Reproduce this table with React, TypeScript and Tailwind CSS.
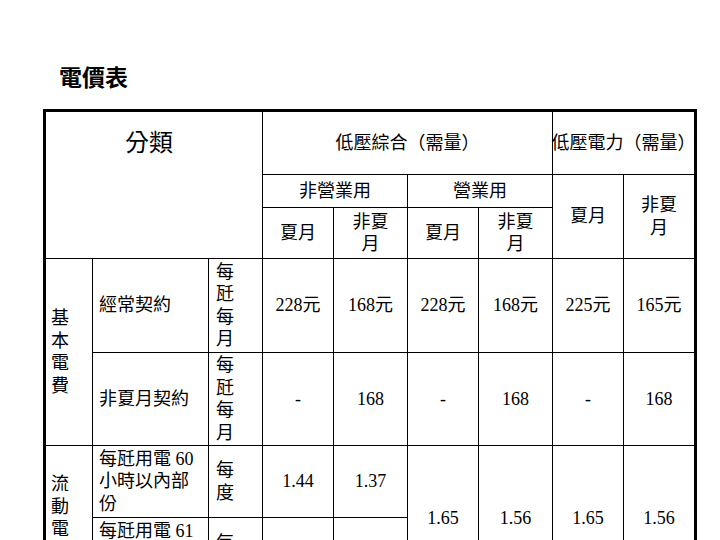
const C = "bg-white flex items-center justify-center text-center whitespace-nowrap";
const L = "bg-white flex items-center justify-start text-left whitespace-nowrap";

export default function App() {
  return (
    <div className="w-[720px] h-[540px] overflow-hidden bg-white text-black font-['Liberation_Serif','Noto_Sans_CJK_TC',serif]">
      <div className="pt-[63px] pl-[59px] text-[23px] font-bold leading-[26px] font-['Noto_Sans_CJK_TC',sans-serif]">
        電價表
      </div>
      <div className="ml-[43px] mt-[20px] w-[654px] border-[3px] border-black bg-black grid gap-px grid-cols-[46px_115px_53px_70px_73px_70px_73px_70px_70px] grid-rows-[62px_32px_50px_93px_92px_71px_72px] text-[18px] leading-[22.5px]">
        {/* header row 1 */}
        <div className="bg-white col-start-1 col-span-3 row-start-1 row-span-3 flex justify-center items-start pt-[17px] pr-[10px] text-[24px] leading-[28px]">
          分類
        </div>
        <div className={`${C} col-start-4 col-span-4 row-start-1`}>低壓綜合（需量）</div>
        <div className={`${C} col-start-8 col-span-2 row-start-1`}>低壓電力（需量）</div>

        {/* header row 2 */}
        <div className={`${C} col-start-4 col-span-2 row-start-2`}>非營業用</div>
        <div className={`${C} col-start-6 col-span-2 row-start-2`}>營業用</div>
        <div className={`${C} col-start-8 row-start-2 row-span-2`}>夏月</div>
        <div className={`${C} col-start-9 row-start-2 row-span-2`}>
          非夏
          <br />月
        </div>

        {/* header row 3 */}
        <div className={`${C} col-start-4 row-start-3`}>夏月</div>
        <div className={`${C} col-start-5 row-start-3`}>
          非夏
          <br />月
        </div>
        <div className={`${C} col-start-6 row-start-3`}>夏月</div>
        <div className={`${C} col-start-7 row-start-3`}>
          非夏
          <br />月
        </div>

        {/* basic fee */}
        <div className={`${L} col-start-1 row-start-4 row-span-2 pl-[5px]`}>
          基<br />本<br />電<br />費
        </div>
        <div className={`${L} col-start-2 row-start-4 pl-[6px]`}>經常契約</div>
        <div className={`${L} col-start-3 row-start-4 pl-[7px]`}>
          每<br />瓩<br />每<br />月
        </div>
        <div className={`${C} col-start-4 row-start-4`}>228元</div>
        <div className={`${C} col-start-5 row-start-4`}>168元</div>
        <div className={`${C} col-start-6 row-start-4`}>228元</div>
        <div className={`${C} col-start-7 row-start-4`}>168元</div>
        <div className={`${C} col-start-8 row-start-4`}>225元</div>
        <div className={`${C} col-start-9 row-start-4`}>165元</div>

        <div className={`${L} col-start-2 row-start-5 pl-[6px]`}>非夏月契約</div>
        <div className={`${L} col-start-3 row-start-5 pl-[7px]`}>
          每<br />瓩<br />每<br />月
        </div>
        <div className={`${C} col-start-4 row-start-5`}>-</div>
        <div className={`${C} col-start-5 row-start-5`}>168</div>
        <div className={`${C} col-start-6 row-start-5`}>-</div>
        <div className={`${C} col-start-7 row-start-5`}>168</div>
        <div className={`${C} col-start-8 row-start-5`}>-</div>
        <div className={`${C} col-start-9 row-start-5`}>168</div>

        {/* energy fee */}
        <div className={`${L} col-start-1 row-start-6 row-span-2 pl-[5px]`}>
          流<br />動<br />電<br />費
        </div>
        <div className={`${L} col-start-2 row-start-6 pl-[6px]`}>
          每瓩用電 60
          <br />小時以內部
          <br />份
        </div>
        <div className={`${L} col-start-3 row-start-6 pl-[7px]`}>
          每<br />度
        </div>
        <div className={`${C} col-start-4 row-start-6`}>1.44</div>
        <div className={`${C} col-start-5 row-start-6`}>1.37</div>
        <div className={`${C} col-start-6 row-start-6 row-span-2`}>1.65</div>
        <div className={`${C} col-start-7 row-start-6 row-span-2`}>1.56</div>
        <div className={`${C} col-start-8 row-start-6 row-span-2`}>1.65</div>
        <div className={`${C} col-start-9 row-start-6 row-span-2`}>1.56</div>

        <div className={`${L} col-start-2 row-start-7 pl-[6px]`}>
          每瓩用電 61
          <br />小時以上部
          <br />份
        </div>
        <div className={`${L} col-start-3 row-start-7 pl-[7px]`}>
          每<br />度
        </div>
        <div className={`${C} col-start-4 row-start-7`}>1.68</div>
        <div className={`${C} col-start-5 row-start-7`}>1.56</div>
      </div>
    </div>
  );
}
